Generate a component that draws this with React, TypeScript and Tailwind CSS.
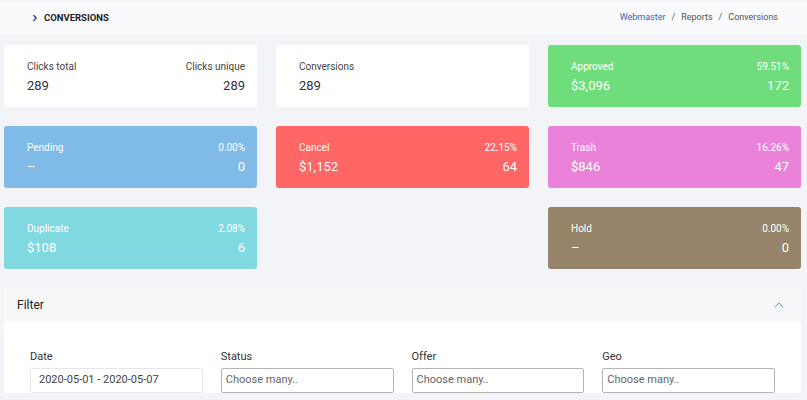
import { ChevronRight, ChevronUp } from "lucide-react";

type Stat = {
	label: string;
	right: string;
	value: string;
	count: string;
	bg: string;
	light?: boolean;
};

const stats: (Stat | null)[] = [
	{ label: "Clicks total", right: "Clicks unique", value: "289", count: "289", bg: "bg-white", light: true },
	{ label: "Conversions", right: "", value: "289", count: "", bg: "bg-white", light: true },
	{ label: "Approved", right: "59.51%", value: "$3,096", count: "172", bg: "bg-[#6fdd7b]" },
	{ label: "Pending", right: "0.00%", value: "–", count: "0", bg: "bg-[#80bae6]" },
	{ label: "Cancel", right: "22.15%", value: "$1,152", count: "64", bg: "bg-[#ff6666]" },
	{ label: "Trash", right: "16.26%", value: "$846", count: "47", bg: "bg-[#eb82d9]" },
	{ label: "Duplicate", right: "2.08%", value: "$108", count: "6", bg: "bg-[#80d8e1]" },
	null,
	{ label: "Hold", right: "0.00%", value: "–", count: "0", bg: "bg-[#96846a]" },
];

function StatCard({ s }: { s: Stat }) {
	const label = s.light ? "text-[#444]" : "text-white";
	const value = s.light ? "text-[#333]" : "text-white";
	return (
		<div className={`${s.bg} h-[62px] rounded-[3px] pl-[23px] pr-[12px] pt-[15px]`}>
			<div className={`flex justify-between text-[10px] leading-[13px] ${label}`}>
				<span>{s.label}</span>
				<span>{s.right}</span>
			</div>
			<div className={`mt-[4px] flex justify-between text-[13px] leading-[17px] ${value}`}>
				<span>{s.value}</span>
				<span>{s.count}</span>
			</div>
		</div>
	);
}

function Field({ label, value, placeholder }: { label: string; value?: string; placeholder?: string }) {
	return (
		<div className="w-[173px]">
			<div className="text-[11px] leading-[14px] text-[#333]">{label}</div>
			<div className="mt-[4px]">
				{value ? (
					<div className="flex h-[25px] items-center rounded-[3px] border border-[#e3e6ea] px-[8px] text-[11px] text-[#444]">
						{value}
					</div>
				) : (
					<div className="flex h-[25px] items-center rounded-[2px] border border-[#b5b5b5] px-[4px] text-[11px] text-[#666]">
						{placeholder}
					</div>
				)}
			</div>
		</div>
	);
}

export default function App() {
	return (
		<div className="min-h-[400px] bg-[#f2f4f8] pt-[2px] font-['Roboto',sans-serif]">
			<div className="flex h-[32px] items-center justify-between bg-[#f9fafc] pl-[30px] pr-[29px]">
				<div className="flex items-center gap-[4px]">
					<ChevronRight className="h-[10px] w-[10px] text-[#2b4a78]" strokeWidth={3.5} />
					<span className="text-[9.5px] font-bold text-[#222]">CONVERSIONS</span>
				</div>
				<div className="text-[9px] text-[#555]">
					<span className="text-[#3a66a8]">Webmaster</span>
					<span className="mx-[6px]">/</span>
					<span>Reports</span>
					<span className="mx-[6px]">/</span>
					<span>Conversions</span>
				</div>
			</div>

			<div className="pl-[4px] pr-[6px] pt-[11px]">
				<div className="grid grid-cols-3 gap-x-[19px] gap-y-[19px]">
					{stats.map((s, i) => (s ? <StatCard key={i} s={s} /> : <div key={i} />))}
				</div>

				<div className="mt-[19px] rounded-[3px] bg-white">
					<div className="flex h-[34px] items-center justify-between bg-[#f7f8fa] pl-[13px] pr-[14px]">
						<span className="text-[12px] text-[#222]">Filter</span>
						<ChevronUp className="h-[16px] w-[16px] text-[#6b8bb5]" strokeWidth={1.5} />
					</div>
					<div className="flex gap-[18px] px-[26px] pt-[28px]">
						<Field label="Date" value="2020-05-01 - 2020-05-07" />
						<Field label="Status" placeholder="Choose many.." />
						<Field label="Offer" placeholder="Choose many.." />
						<Field label="Geo" placeholder="Choose many.." />
					</div>
				</div>
			</div>
		</div>
	);
}
